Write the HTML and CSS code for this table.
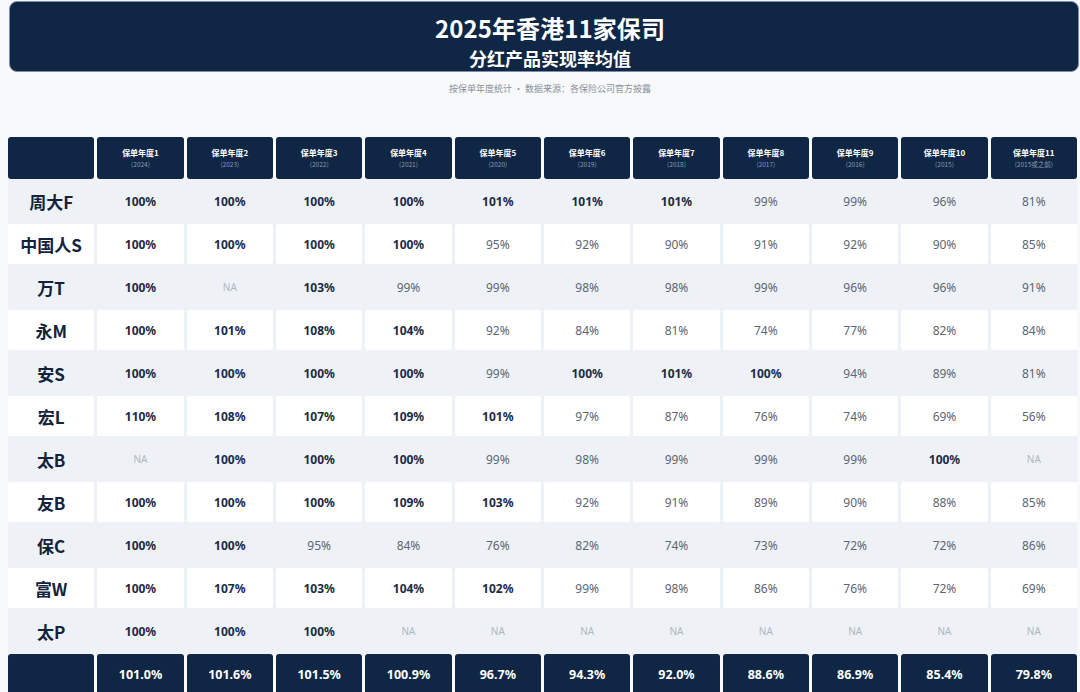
FILE: index.html
```html
<!DOCTYPE html>
<html lang="zh">
<head>
<meta charset="utf-8">
<link rel="stylesheet" href="styles.css">
</head>
<body>
<div class="page">
  <header class="banner">
    <div class="t1">2025年香港11家保司</div>
    <div class="t2">分红产品实现率均值</div>
  </header>
  <div class="sub">按保单年度统计 · 数据来源：各保险公司官方披露</div>

  <div class="table">
    <div class="row head">
      <div class="hc"></div>
      <div class="hc"><b>保单年度1</b><i>(2024)</i></div>
      <div class="hc"><b>保单年度2</b><i>(2023)</i></div>
      <div class="hc"><b>保单年度3</b><i>(2022)</i></div>
      <div class="hc"><b>保单年度4</b><i>(2021)</i></div>
      <div class="hc"><b>保单年度5</b><i>(2020)</i></div>
      <div class="hc"><b>保单年度6</b><i>(2019)</i></div>
      <div class="hc"><b>保单年度7</b><i>(2018)</i></div>
      <div class="hc"><b>保单年度8</b><i>(2017)</i></div>
      <div class="hc"><b>保单年度9</b><i>(2016)</i></div>
      <div class="hc"><b>保单年度10</b><i>(2015)</i></div>
      <div class="hc"><b>保单年度11</b><i>(2015或之前)</i></div>
    </div>
    <div class="body">
      <div class="row odd">
        <div class="c lbl">周大F</div>
        <div class="c hi">100%</div><div class="c hi">100%</div><div class="c hi">100%</div><div class="c hi">100%</div><div class="c hi">101%</div><div class="c hi">101%</div><div class="c hi">101%</div><div class="c">99%</div><div class="c">99%</div><div class="c">96%</div><div class="c">81%</div>
      </div>
      <div class="row even">
        <div class="c lbl">中国人S</div>
        <div class="c hi">100%</div><div class="c hi">100%</div><div class="c hi">100%</div><div class="c hi">100%</div><div class="c">95%</div><div class="c">92%</div><div class="c">90%</div><div class="c">91%</div><div class="c">92%</div><div class="c">90%</div><div class="c">85%</div>
      </div>
      <div class="row odd">
        <div class="c lbl">万T</div>
        <div class="c hi">100%</div><div class="c na">NA</div><div class="c hi">103%</div><div class="c">99%</div><div class="c">99%</div><div class="c">98%</div><div class="c">98%</div><div class="c">99%</div><div class="c">96%</div><div class="c">96%</div><div class="c">91%</div>
      </div>
      <div class="row even">
        <div class="c lbl">永M</div>
        <div class="c hi">100%</div><div class="c hi">101%</div><div class="c hi">108%</div><div class="c hi">104%</div><div class="c">92%</div><div class="c">84%</div><div class="c">81%</div><div class="c">74%</div><div class="c">77%</div><div class="c">82%</div><div class="c">84%</div>
      </div>
      <div class="row odd">
        <div class="c lbl">安S</div>
        <div class="c hi">100%</div><div class="c hi">100%</div><div class="c hi">100%</div><div class="c hi">100%</div><div class="c">99%</div><div class="c hi">100%</div><div class="c hi">101%</div><div class="c hi">100%</div><div class="c">94%</div><div class="c">89%</div><div class="c">81%</div>
      </div>
      <div class="row even">
        <div class="c lbl">宏L</div>
        <div class="c hi">110%</div><div class="c hi">108%</div><div class="c hi">107%</div><div class="c hi">109%</div><div class="c hi">101%</div><div class="c">97%</div><div class="c">87%</div><div class="c">76%</div><div class="c">74%</div><div class="c">69%</div><div class="c">56%</div>
      </div>
      <div class="row odd">
        <div class="c lbl">太B</div>
        <div class="c na">NA</div><div class="c hi">100%</div><div class="c hi">100%</div><div class="c hi">100%</div><div class="c">99%</div><div class="c">98%</div><div class="c">99%</div><div class="c">99%</div><div class="c">99%</div><div class="c hi">100%</div><div class="c na">NA</div>
      </div>
      <div class="row even">
        <div class="c lbl">友B</div>
        <div class="c hi">100%</div><div class="c hi">100%</div><div class="c hi">100%</div><div class="c hi">109%</div><div class="c hi">103%</div><div class="c">92%</div><div class="c">91%</div><div class="c">89%</div><div class="c">90%</div><div class="c">88%</div><div class="c">85%</div>
      </div>
      <div class="row odd">
        <div class="c lbl">保C</div>
        <div class="c hi">100%</div><div class="c hi">100%</div><div class="c">95%</div><div class="c">84%</div><div class="c">76%</div><div class="c">82%</div><div class="c">74%</div><div class="c">73%</div><div class="c">72%</div><div class="c">72%</div><div class="c">86%</div>
      </div>
      <div class="row even">
        <div class="c lbl">富W</div>
        <div class="c hi">100%</div><div class="c hi">107%</div><div class="c hi">103%</div><div class="c hi">104%</div><div class="c hi">102%</div><div class="c">99%</div><div class="c">98%</div><div class="c">86%</div><div class="c">76%</div><div class="c">72%</div><div class="c">69%</div>
      </div>
      <div class="row odd">
        <div class="c lbl">太P</div>
        <div class="c hi">100%</div><div class="c hi">100%</div><div class="c hi">100%</div><div class="c na">NA</div><div class="c na">NA</div><div class="c na">NA</div><div class="c na">NA</div><div class="c na">NA</div><div class="c na">NA</div><div class="c na">NA</div><div class="c na">NA</div>
      </div>
      <div class="row foot">
        <div class="fc"></div>
        <div class="fc">101.0%</div><div class="fc">101.6%</div><div class="fc">101.5%</div><div class="fc">100.9%</div><div class="fc">96.7%</div><div class="fc">94.3%</div><div class="fc">92.0%</div><div class="fc">88.6%</div><div class="fc">86.9%</div><div class="fc">85.4%</div><div class="fc">79.8%</div>
      </div>
    </div>
  </div>
</div>
</body>
</html>
```

FILE: styles.css
```css
* { box-sizing: border-box; }
html, body {
  margin: 0;
  padding: 0;
  background: #f7f9fb;
  font-family: "Noto Sans", "Open Sans", "Noto Sans CJK SC", sans-serif;
  overflow: hidden;
}
.page {
  width: 1080px;
  height: 692px;
  padding: 1px 0 0 8px;
}
.banner {
  width: 1070px;
  height: 71px;
  margin-left: 1px;
  background: #0f2744;
  border: 1px solid #7a8ea8;
  border-radius: 8px;
  color: #fff;
  text-align: center;
  padding: 12px 0 0 12px;
  font-family: "Noto Sans CJK SC", "Noto Sans", sans-serif;
  font-weight: 700;
}
.t1 {
  font-size: 24px;
  line-height: 28px;
  letter-spacing: 0.1px;
}
.t2 {
  margin-top: 5px;
  font-size: 18px;
  line-height: 22px;
}
.sub {
  margin-top: 10px;
  height: 14px;
  line-height: 14px;
  text-align: center;
  padding-left: 12px;
  font-size: 9px;
  color: #8a9099;
  font-family: "Noto Sans CJK SC", sans-serif;
}
.table {
  margin-top: 41px;
  width: 1069px;
}
.row {
  display: grid;
  grid-template-columns: repeat(12, 1fr);
  column-gap: 3px;
}
.head {
  height: 42px;
}
.hc {
  background: #0f2744;
  border-radius: 3px;
  color: #fff;
  display: flex;
  flex-direction: column;
  align-items: center;
  justify-content: center;
  font-family: "Noto Sans CJK SC", "Noto Sans", sans-serif;
}
.hc b {
  font-size: 8px;
  line-height: 12px;
  font-weight: 700;
}
.hc i {
  font-style: normal;
  font-size: 6.5px;
  line-height: 11px;
  color: #8c9ab0;
}
.body {
  background: #eef2f6;
  padding-top: 2px;
  display: flex;
  flex-direction: column;
  row-gap: 3px;
}
.row.odd, .row.even {
  height: 40px;
}
.c {
  display: flex;
  align-items: center;
  justify-content: center;
  border-radius: 2px;
  font-size: 12px;
  color: #5d6674;
}
.even .c {
  background: #ffffff;
}
.c.hi {
  font-weight: 700;
  color: #1b2b45;
}
.c.na {
  font-size: 10px;
  color: #aeb6c1;
}
.c.lbl {
  font-family: "Noto Sans CJK SC", "Noto Sans", sans-serif;
  font-size: 17px;
  font-weight: 700;
  color: #13233d;
}
.foot {
  height: 40px;
  background: #f7f9fb;
}
.fc {
  background: #0f2744;
  border-radius: 3px;
  color: #fff;
  font-weight: 700;
  font-size: 12.5px;
  display: flex;
  align-items: center;
  justify-content: center;
}
```
